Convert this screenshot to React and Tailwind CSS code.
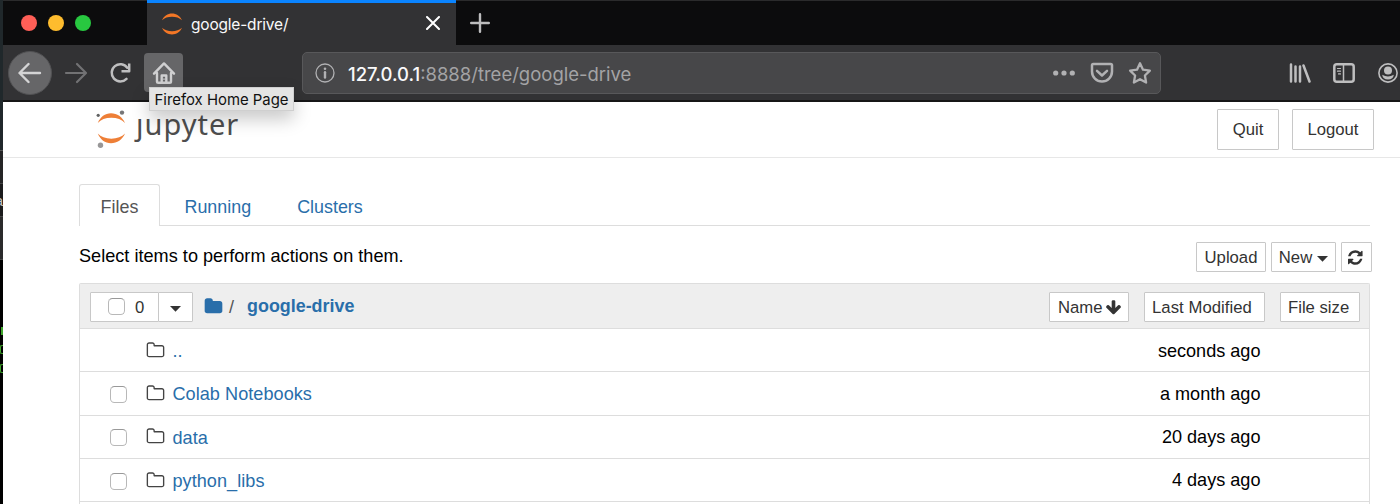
import React from "react";

const FOLDER =
  "M1728 608v704q0 92-66 158t-158 66h-1216q-92 0-158-66t-66-158v-960q0-92 66-158t158-66h320q92 0 158 66t66 158v32h672q92 0 158 66t66 158z";
const FOLDER_OPEN =
  "M1600 1312v-704q0-40-28-68t-68-28h-704q-40 0-68-28t-28-68v-64q0-40-28-68t-68-28h-320q-40 0-68 28t-28 68v960q0 40 28 68t68 28h1216q40 0 68-28t28-68zm128-704v704q0 92-66 158t-158 66h-1216q-92 0-158-66t-66-158v-960q0-92 66-158t158-66h320q92 0 158 66t66 158v32h672q92 0 158 66t66 158z";
const ARROW_DOWN =
  "M1675 832q0 53-37 90l-651 652q-39 37-91 37-53 0-90-37l-651-652q-38-36-38-90 0-53 38-91l74-75q39-37 91-37 53 0 90 37l294 294v-704q0-52 38-90t90-38h128q52 0 90 38t38 90v704l294-294q37-37 90-37 52 0 91 37l75 75q37 39 37 91z";
const REFRESH =
  "M1511 1056q0 5-1 7-64 268-268 434.5t-478 166.5q-146 0-282.5-55t-243.5-157l-129 129q-19 19-45 19t-45-19-19-45v-448q0-26 19-45t45-19h448q26 0 45 19t19 45-19 45l-137 137q71 66 161 102t187 36q134 0 250-65t186-179q11-17 53-117 8-23 30-23h192q13 0 22.5 9.5t9.5 22.5zm25-800v448q0 26-19 45t-45 19h-448q-26 0-45-19t-19-45 19-45l138-138q-148-137-349-137-134 0-250 65t-186 179q-11 17-53 117-8 23-30 23h-199q-13 0-22.5-9.5t-9.5-22.5v-7q65-268 270-434.5t480-166.5q146 0 284 55.5t245 156.5l130-129q19-19 45-19t45 19 19 45z";

function Glyph({ d, className }) {
  return (
    <svg viewBox="0 0 1792 1792" fill="currentColor" className={"shrink-0 " + className}>
      <path d={d} />
    </svg>
  );
}

function Stroke({ children, className, width = 2.4, box = "0 0 24 24" }) {
  return (
    <svg
      viewBox={box}
      fill="none"
      stroke="currentColor"
      strokeWidth={width}
      strokeLinecap="round"
      strokeLinejoin="round"
      className={"shrink-0 " + className}
    >
      {children}
    </svg>
  );
}

function Caret({ className }) {
  return (
    <svg viewBox="0 0 11 6" fill="currentColor" className={"h-[6px] w-[11px] shrink-0 " + className}>
      <path d="M0 0h11L5.500 5.800z" />
    </svg>
  );
}

function Checkbox({ className = "" }) {
  return (
    <span
      className={
        "block h-[17px] w-[17px] shrink-0 rounded-[4.500px] border border-[#b8b8b8] border-t-[#999] bg-white " + className
      }
    />
  );
}

function Button({ children, className }) {
  return (
    <button
      className={
        "flex shrink-0 items-center rounded-[1px] border-[1.500px] border-[#c8c8c8] bg-white pt-[2px] text-[16.700px] leading-none text-[#333] " +
        className
      }
    >
      {children}
    </button>
  );
}

function TabStrip() {
  return (
    <div className="flex h-[45px] shrink-0 border-t border-[#2b2b2c] bg-[#0c0c0d]">
      <div className="flex w-[144px] items-center gap-[11px] pl-[18px]">
        <span className="h-4 w-4 rounded-full bg-[#ff5f57]" />
        <span className="h-4 w-4 rounded-full bg-[#febc2e]" />
        <span className="h-4 w-4 rounded-full bg-[#28c840]" />
      </div>
      <div className="-mt-px flex h-[46px] w-[309px] items-center border-t-[3px] border-[#0a84ff] bg-[#323234] pl-[14px]">
        <svg viewBox="0 0 22 22" className="-mt-[2px] h-[22px] w-[22px]" fill="#f37726">
          <path d="M1 7.200C3 2.800 6.700 .5 11 .5s8 2.300 10 6.700C18.500 4.900 15 3.800 11 3.800S3.500 4.900 1 7.200z" />
          <path d="M1 14.800c2 4.400 5.700 6.700 10 6.700s8-2.300 10-6.700c-2.500 2.300-6 3.400-10 3.400S3.500 17.100 1 14.800z" />
        </svg>
        <span className="ml-[8px] font-[Inter,sans-serif] text-[15.500px] leading-none tracking-[-0.200px] text-[#f9f9fa]">
          google-drive/
        </span>
        <Stroke box="0 0 14 14" width={2} className="-mt-[3px] ml-auto mr-[16px] h-[14px] w-[14px] text-white">
          <path d="M1 1l12 12M13 1L1 13" />
        </Stroke>
      </div>
      <div className="flex items-center pl-[14px] text-[#bdbdbe]">
        <Stroke box="0 0 20 20" width={2.4} className="h-5 w-5">
          <path d="M10 1.200v17.600M1.200 10h17.600" />
        </Stroke>
      </div>
    </div>
  );
}

function Toolbar() {
  return (
    <div className="flex h-[57px] shrink-0 items-center border-b-2 border-[#161617] bg-[#323234] pl-[5px] text-[#bebebf]">
      <div className="flex h-[44px] w-[44px] shrink-0 items-center justify-center rounded-full border border-[#525254] bg-[#666668] text-[#d4d4d5]">
        <Stroke className="h-6 w-6" width={2.4}>
          <path d="M22 12H2.500M10.500 3l-9 9 9 9" />
        </Stroke>
      </div>
      <Stroke className="ml-[12px] h-6 w-6 text-[#727274]" width={2.200}>
        <path d="M2 12h19.500M13 3l9 9-9 9" />
      </Stroke>
      <Stroke className="ml-[20px] h-6 w-6" width={2.500}>
        <path d="M18.500 17.800a8.600 8.600 0 1 1 .8-11" />
        <path d="M21.200 2.500v7.700h-7.700" strokeLinecap="butt" />
      </Stroke>
      <div className="relative ml-[12px] flex h-[39px] w-[39px] shrink-0 items-center justify-center rounded-[4px] bg-[#666668] text-[#d0d0d1]">
        <Stroke className="h-6 w-6" width={2.400}>
          <path d="M2 12.700L12 2.400 22 12.700M5 12v8.500q0 1.300 1.300 1.300h11.400q1.300 0 1.300-1.300V12" />
          <path d="M9.700 21v-6.500h4.600V21" />
          <path d="M12 18v.2" strokeWidth="1.500" />
        </Stroke>
        <span className="absolute left-[5px] top-[34px] z-10 flex h-[24px] w-[145px] items-center justify-center whitespace-nowrap border border-[#cfcfcf] bg-[#e4e4e4] pt-[2px] font-[Inter,sans-serif] text-[14.900px] leading-none text-[#111] shadow-[0_8px_18px_rgba(0,0,0,0.22)]">
          Firefox Home Page
        </span>
      </div>
      <div className="ml-[119px] flex h-[42px] w-[859px] shrink-0 items-center rounded-[5px] border-[1.500px] border-[#58585a] bg-[#474749] pl-[12px] pr-[8px] text-[#b1b1b3]">
        <Stroke box="0 0 20 20" width={1.300} className="h-5 w-5">
          <circle cx="10" cy="10" r="9" />
          <path d="M10 9.300v5.200" strokeWidth="2.400" />
          <path d="M10 5.700v.1" strokeWidth="2.600" />
        </Stroke>
        <span className="ml-[13px] mt-[3px] font-[Inter,sans-serif] text-[18.500px] leading-none text-[#a3a3a5]">
          <span className="font-medium text-[#f9f9fa]">127.0.0.1</span>
          :8888/tree/google-drive
        </span>
        <svg viewBox="0 0 22 6" className="ml-auto h-[6px] w-[22px]" fill="currentColor">
          <circle cx="2.700" cy="3" r="2.600" />
          <circle cx="11" cy="3" r="2.600" />
          <circle cx="19.300" cy="3" r="2.600" />
        </svg>
        <Stroke box="0 0 24 22" width={2.500} className="ml-[15px] h-[22px] w-[24px]">
          <path d="M3.300 2h17.400q1.300 0 1.300 1.300V9.500a10 10 0 0 1-20 0V3.300Q2 2 3.300 2z" />
          <path d="M7 8.800l5 4.700 5-4.700" />
        </Stroke>
        <Stroke className="ml-[14px] h-6 w-6" width={2.300}>
          <path d="M12 2.300l3 6.400 6.900.9-5 4.900 1.200 7L12 18.200l-6.100 3.300 1.200-7-5-4.900 6.900-.9z" />
        </Stroke>
      </div>
      <Stroke box="0 0 22 20" width={2.500} className="ml-[128px] h-5 w-[22px]">
        <path d="M2 1.500v17M6.500 3.500v15M11 3.500v15M14.500 2.500l6 16" />
      </Stroke>
      <Stroke box="0 0 22 20" width={2.500} className="ml-[22px] h-5 w-[22px]">
        <rect x="1.300" y="1.300" width="19.400" height="17.400" rx="2.500" />
        <path d="M10.500 2v16" strokeWidth="1.500" />
        <path d="M4.500 5.500h3M4.500 8.200h3M5.500 10.900h2" strokeWidth="1.200" />
      </Stroke>
      <Stroke box="0 0 20 20" width={1.600} className="ml-[23px] h-5 w-5">
        <circle cx="10" cy="10" r="9.100" />
        <circle cx="10" cy="7.500" r="4" fill="currentColor" stroke="none" />
        <path d="M4.200 11.800q5.800 3.200 11.600 0-.5 4.700-5.800 4.700t-5.800-4.700z" fill="currentColor" stroke="none" />
      </Stroke>
    </div>
  );
}

function Header() {
  return (
    <div className="flex h-[56px] shrink-0 border-b-[1.500px] border-[#e7e7e7] pl-[92px] pr-[26px]">
      <svg viewBox="0 0 32 40" className="mt-[7px] h-[40px] w-[32px]">
        <path d="M2.800 14C5.300 8 10 4.300 16 4.300S27.500 8 30 14C27 10.600 22 8.800 16.300 8.800S5.800 10.600 2.800 14z" fill="#ee7f37" />
        <path d="M2.800 24.500C5.300 30.500 10 34.300 16 34.300s11.500-3.800 14-9.800c-3 3.400-8 5.200-13.700 5.200S5.800 27.900 2.800 24.500z" fill="#ee7f37" />
        <circle cx="27" cy="3.600" r="2.200" fill="#767677" />
        <circle cx="3.200" cy="6.300" r="1.600" fill="#616262" />
        <circle cx="5.500" cy="36.200" r="2.700" fill="#989798" />
      </svg>
      <span className="ml-[9px] mt-px flex h-[40px] items-center font-['Noto_Sans',sans-serif] text-[29px] leading-none tracking-[1px] text-[#4e4e4e]">
        <span className="[clip-path:inset(9px_-4px_-10px_-8px)]">j</span>upyter
      </span>
      <div className="ml-auto flex gap-[13px] pt-[7px]">
        <Button className="h-[41px] w-[62px] justify-center">Quit</Button>
        <Button className="h-[41px] w-[82px] justify-center">Logout</Button>
      </div>
    </div>
  );
}

const rows = [
  { name: "..", modified: "seconds ago", parent: true },
  { name: "Colab Notebooks", modified: "a month ago" },
  { name: "data", modified: "20 days ago" },
  { name: "python_libs", modified: "4 days ago" },
];

function FileList() {
  return (
    <div className="mt-[11px] h-[240px] rounded-t-[2px] border-[1.500px] border-b-0 border-[#ddd]">
      <div className="flex h-[45px] items-center border-b border-[#ddd] bg-[#eee] pl-[10px] pr-[9px] pt-[2px]">
        <Button className="h-[30px] w-[69px] pl-[17px]">
          <Checkbox className="-mt-[3px]" />
          <span className="ml-[10px]">0</span>
        </Button>
        <Button className="-ml-px h-[30px] w-[35px] justify-center">
          <Caret className="mt-[2px]" />
        </Button>
        <Glyph d={FOLDER} className="-mt-[2px] ml-[11px] h-[19px] w-[19px] text-[#296eaa]" />
        <span className="ml-[6px] text-[#555]">/</span>
        <span className="ml-[13px] text-[17.900px] font-bold text-[#296eaa]">google-drive</span>
        <div className="ml-auto flex gap-[15px]">
          <Button className="h-[30px] w-[80px] pl-[8px]">
            Name
            <Glyph d={ARROW_DOWN} className="-mt-[2px] ml-[2px] h-[17px] w-[17px]" />
          </Button>
          <Button className="h-[30px] w-[121px] pl-[7px] tracking-[0.050px]">Last Modified</Button>
          <Button className="h-[30px] w-[80px] pl-[7px]">File size</Button>
        </div>
      </div>
      {rows.map((row) => (
        <div key={row.name} className="flex h-[43.300px] items-center border-b border-[#ddd] pl-[30px] pr-[108.500px]">
          {row.parent ? <span className="w-[17px]" /> : <Checkbox className="mt-[2px]" />}
          <Glyph d={FOLDER_OPEN} className="ml-[19px] h-[19px] w-[19px] text-[#444]" />
          <span className="ml-[7.500px] mt-[2px] tracking-[0.040px] text-[#296eaa]">{row.name}</span>
          <span className="ml-auto mt-px">{row.modified}</span>
        </div>
      ))}
    </div>
  );
}

function Backdrop() {
  return (
    <div className="flex w-[3px] shrink-0 flex-col overflow-hidden bg-black">
      <div className="h-[150px] bg-[#20282b]" />
      <div className="h-[33px] border-t border-[#555] bg-[#252526]" />
      <div className="flex h-[33px] justify-end border-t border-[#444] bg-[#1b1b1c] pt-[10px] text-[14px] leading-none text-[#c8c8c8]">
        <span>a</span>
      </div>
      <div className="h-[44px] border-y border-[#444] bg-[#2a2a2b]" />
      <div className="mt-[67px] h-[8px] w-[2px] self-end bg-[#3fa52b]" />
      <div className="mt-[10px] h-[9px] w-[3px] rounded-l-[2px] border-[1.500px] border-r-0 border-[#3fa52b]" />
      <div className="mt-[10px] h-[9px] w-[3px] rounded-l-[2px] border-[1.500px] border-r-0 border-[#3fa52b]" />
    </div>
  );
}

export default function App() {
  return (
    <div className="flex h-[504px] w-[1400px] overflow-hidden bg-white font-['Liberation_Sans',Arial,sans-serif] text-[18.100px] leading-none text-black">
      <Backdrop />
      <div className="flex min-w-0 flex-1 flex-col">
        <TabStrip />
        <Toolbar />
        <Header />
        <main className="flex flex-col pl-[76px] pr-[30px] pt-[26px]">
          <nav className="flex h-[42px] shrink-0 border-b-[1.500px] border-[#ddd] text-[17.900px] text-[#296eaa]">
            <span className="flex h-[42px] w-[81px] items-center justify-center rounded-t-[3px] border-[1.500px] border-b-0 border-[#ddd] bg-white pt-[4px] text-[#555]">
              Files
            </span>
            <span className="flex items-center pl-[24.500px] pt-[6px]">Running</span>
            <span className="flex items-center pl-[46px] pt-[6px]">Clusters</span>
          </nav>
          <div className="-mr-[2px] mt-[16px] flex h-[30px] items-center">
            <span className="-mt-px tracking-[0.020px]">Select items to perform actions on them.</span>
            <div className="ml-auto flex gap-[5px]">
              <Button className="h-[30px] w-[70px] justify-center">Upload</Button>
              <Button className="h-[30px] w-[65px] justify-center">
                New
                <Caret className="ml-[5px] mt-[2px]" />
              </Button>
              <Button className="h-[30px] w-[31px] justify-center">
                <Glyph d={REFRESH} className="-mt-[2px] h-[17px] w-[17px]" />
              </Button>
            </div>
          </div>
          <FileList />
        </main>
      </div>
    </div>
  );
}
